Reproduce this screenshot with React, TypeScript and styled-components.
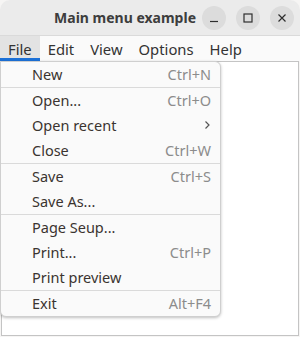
import styled, { createGlobalStyle } from "styled-components";

const Global = createGlobalStyle`
  html, body {
    margin: 0;
    padding: 0;
    background: #f6f5f4;
  }
  body {
    font-family: "Noto Sans", "DejaVu Sans", sans-serif;
    color: #333;
  }
`;

const Window = styled.div`
  position: relative;
  width: 300px;
  height: 337px;
  display: flex;
  flex-direction: column;
  background: #f6f5f4;
  overflow: hidden;
`;

const TitleBar = styled.div`
  height: 35px;
  display: flex;
  align-items: center;
  justify-content: flex-end;
  gap: 10px;
  padding-right: 6px;
  background: #ebebeb;
  border-bottom: 1px solid #dadada;
  border-radius: 10px 10px 0 0;
`;

const Title = styled.div`
  font-size: 14px;
  font-weight: 700;
  color: #3d3d3d;
  margin-right: -4px;
  padding-bottom: 1px;
`;

const WinButton = styled.button`
  width: 24px;
  height: 24px;
  border: 0;
  padding: 0;
  border-radius: 50%;
  background: #dcdcdc;
  display: grid;
  place-items: center;
  svg {
    display: block;
  }
`;

const MenuBar = styled.div`
  height: 25px;
  display: flex;
  background: #fafafa;
`;

const MenuBarItem = styled.div<{ $active?: boolean }>`
  padding: 0 8px;
  display: flex;
  align-items: center;
  font-size: 14.8px;
  color: #333;
  background: ${({ $active }) => ($active ? "#e3e3e3" : "transparent")};
  box-shadow: ${({ $active }) => ($active ? "inset 0 -3px 0 #1c71d8" : "none")};
`;

const Content = styled.div`
  flex: 1;
  margin: 0 1px 1px 1px;
  background: #fff;
  border: 1px solid #c4c4c4;
`;

const Dropdown = styled.div`
  position: absolute;
  top: 61px;
  left: 0;
  width: 219px;
  background: #fafafa;
  border: 1px solid #cfcfcf;
  border-radius: 0 6px 6px 6px;
  box-shadow: 0 1px 3px rgba(0, 0, 0, 0.25);
`;

const Row = styled.div`
  height: 25px;
  display: flex;
  align-items: center;
  justify-content: space-between;
  padding: 0 9px 1px 31px;
  box-sizing: border-box;
  font-size: 14.5px;
`;

const Label = styled.span`
  color: #3a3430;
`;

const Shortcut = styled.span`
  color: #8c8c8c;
`;

const Separator = styled.div`
  height: 1px;
  background: #dadada;
`;

type Item = { label: string; shortcut?: string; submenu?: boolean } | "sep";

const items: Item[] = [
  { label: "New", shortcut: "Ctrl+N" },
  "sep",
  { label: "Open...", shortcut: "Ctrl+O" },
  { label: "Open recent", submenu: true },
  { label: "Close", shortcut: "Ctrl+W" },
  "sep",
  { label: "Save", shortcut: "Ctrl+S" },
  { label: "Save As..." },
  "sep",
  { label: "Page Seup..." },
  { label: "Print...", shortcut: "Ctrl+P" },
  { label: "Print preview" },
  "sep",
  { label: "Exit", shortcut: "Alt+F4" },
];

function Chevron() {
  return (
    <svg width="8" height="10" viewBox="0 0 8 10">
      <path d="M2.5 1.5 L6 5 L2.5 8.5" fill="none" stroke="#555" strokeWidth="1.2" />
    </svg>
  );
}

export default function App() {
  return (
    <Window>
      <Global />
      <TitleBar>
        <Title>Main menu example</Title>
        <WinButton>
          <svg width="10" height="10" viewBox="0 0 10 10">
            <path d="M1 8.5 H9" stroke="#2e2e2e" strokeWidth="1.2" />
          </svg>
        </WinButton>
        <WinButton>
          <svg width="10" height="10" viewBox="0 0 10 10">
            <rect x="1" y="1" width="8" height="8" fill="none" stroke="#2e2e2e" strokeWidth="1.2" />
          </svg>
        </WinButton>
        <WinButton>
          <svg width="10" height="10" viewBox="0 0 10 10">
            <path d="M1.5 1.5 L8.5 8.5 M8.5 1.5 L1.5 8.5" stroke="#2e2e2e" strokeWidth="1.2" />
          </svg>
        </WinButton>
      </TitleBar>
      <MenuBar>
        <MenuBarItem $active>File</MenuBarItem>
        <MenuBarItem>Edit</MenuBarItem>
        <MenuBarItem>View</MenuBarItem>
        <MenuBarItem>Options</MenuBarItem>
        <MenuBarItem>Help</MenuBarItem>
      </MenuBar>
      <Content />
      <Dropdown>
        {items.map((it, i) =>
          it === "sep" ? (
            <Separator key={i} />
          ) : (
            <Row key={i}>
              <Label>{it.label}</Label>
              {it.shortcut && <Shortcut>{it.shortcut}</Shortcut>}
              {it.submenu && <Chevron />}
            </Row>
          )
        )}
      </Dropdown>
    </Window>
  );
}
